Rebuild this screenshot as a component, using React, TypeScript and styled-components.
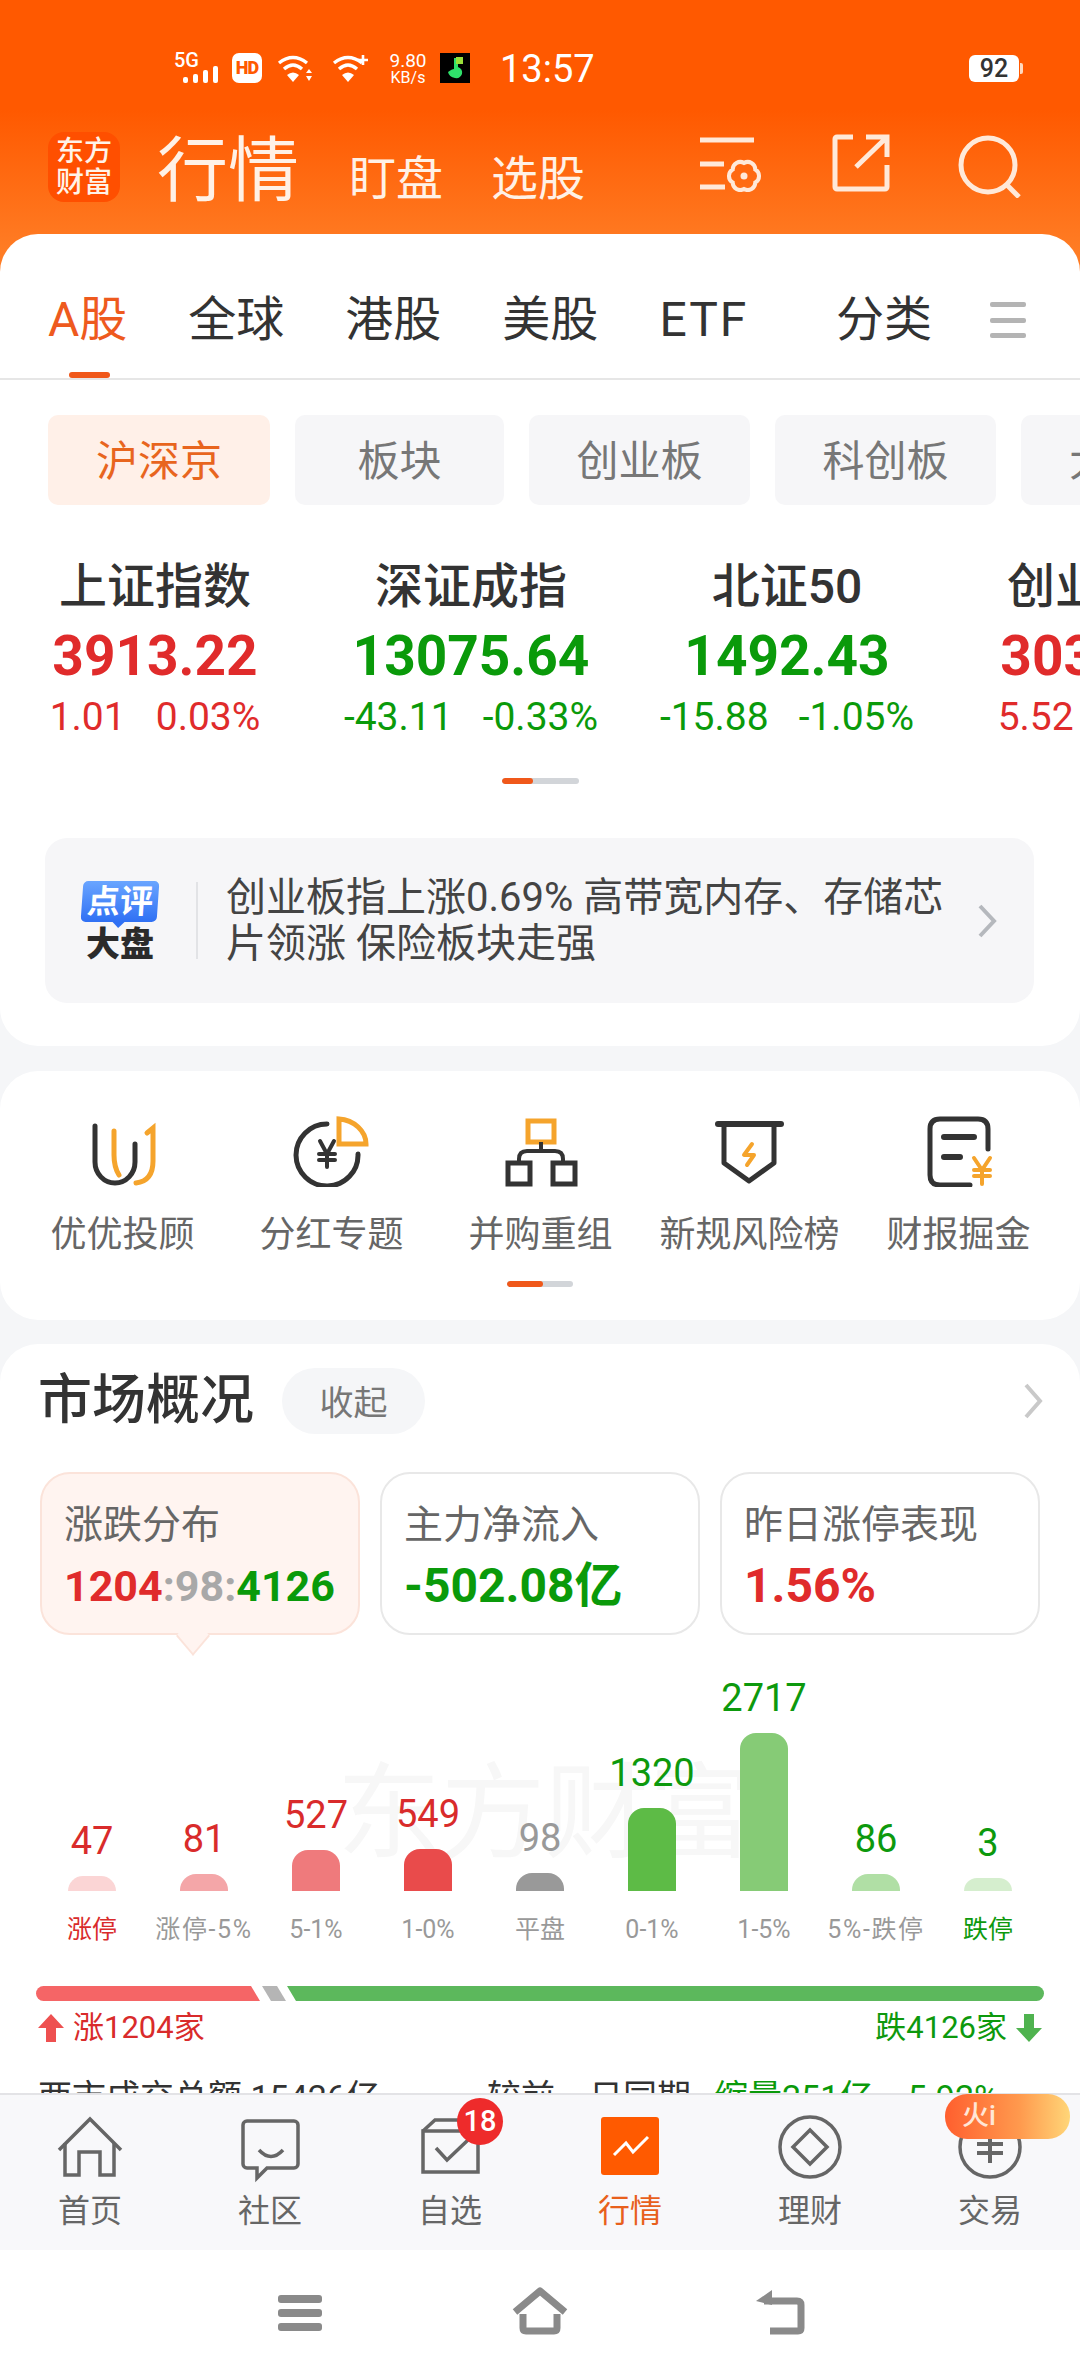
import React from 'react'
import styled, { createGlobalStyle } from 'styled-components'

const RED = '#e02b2b'
const GREEN = '#0a9a0a'
const GOLD = '#f5a42c'
const INK = '#333'
const FONT = 'Roboto, "Noto Sans CJK SC", "Noto Sans", sans-serif'

const GlobalStyle = createGlobalStyle`
  html, body { margin: 0; padding: 0; background: #fff; }
  * { box-sizing: border-box; }
  body { font-family: ${FONT}; }
`

const Screen = styled.div`
  width: 1080px;
  height: 2376px;
  display: flex;
  flex-direction: column;
  overflow: hidden;
  position: relative;
  background: linear-gradient(#ff5900 0, #ff5900 110px, #ff7c24 250px, #ff7c24 290px, #f5f6f8 290px);
`

const Scroll = styled.div`
  height: 2093px;
  flex: none;
  overflow: hidden;
`

/* status bar */
const StatusBar = styled.div`
  height: 120px;
  padding: 53px 61px 0 174px;
  display: flex;
  align-items: flex-start;
  color: #fff;
`
const FiveG = styled.div`
  width: 45px;
  height: 30px;
  position: relative;
  margin-right: 13px;
  font-size: 20px;
  font-weight: 500;
  line-height: 15px;
  svg { position: absolute; right: 0; bottom: 0; }
`
const HdBadge = styled.div`
  width: 30px;
  height: 30px;
  border-radius: 7px;
  background: #fff;
  color: #ff5900;
  font-size: 18px;
  font-weight: 900;
  line-height: 30px;
  text-align: center;
  letter-spacing: -1px;
  margin-right: 15px;
`
const Speed = styled.div`
  width: 40px;
  margin: 0 12px 0 20px;
  text-align: center;
  font-size: 19px;
  line-height: 15px;
  white-space: nowrap;
  small { display: block; font-size: 16px; margin-top: 2px; }
`
const AppThumb = styled.div`
  width: 30px;
  height: 30px;
  background: #000;
  margin-right: 30px;
`
const Clock = styled.div`
  font-size: 38px;
  line-height: 32px;
  margin-top: 0;
`
const Battery = styled.div`
  margin-left: auto;
  width: 50px;
  height: 27px;
  margin-top: 2px;
  border-radius: 6px;
  background: #fff;
  color: #333;
  font-size: 25px;
  font-weight: 500;
  line-height: 27px;
  text-align: center;
  position: relative;
  &::after {
    content: '';
    position: absolute;
    right: -4px;
    top: 8px;
    width: 3px;
    height: 11px;
    border-radius: 0 2px 2px 0;
    background: #ffd9bf;
  }
`

/* title row */
const Header = styled.div`
  height: 114px;
  padding: 12px 58px 0 48px;
  display: flex;
  align-items: flex-start;
  color: #fff1e6;
`
const Logo = styled.div`
  width: 72px;
  height: 70px;
  border-radius: 16px;
  background: #ff4f00;
  color: #fff3e8;
  font-size: 28px;
  line-height: 31px;
  font-weight: 500;
  text-align: center;
  padding-top: 4px;
  margin-right: 37px;
`
const BigTitle = styled.div`
  font-size: 71px;
  line-height: 71px;
  margin: 3px 50px 0 0;
`
const SubTitle = styled.div`
  font-size: 47px;
  line-height: 54px;
  margin: 20px 48px 0 0;
`
const HeaderIcons = styled.div`
  margin-left: auto;
  display: flex;
  align-items: flex-start;
  gap: 68px;
  margin-top: 2px;
`

/* cards */
const Card = styled.div`
  background: #fff;
  border-radius: 38px;
`
const QuoteCard = styled(Card)`
  height: 812px;
  margin-bottom: 25px;
  overflow: hidden;
`
const TabRow = styled.div`
  height: 146px;
  padding: 60px 54px 0 48px;
  display: flex;
  border-bottom: 2px solid #e6e6e6;
`
const TabScroll = styled.div`
  width: 782px;
  display: flex;
  gap: 61px;
  overflow: hidden;
  position: relative;
  &::after {
    content: '';
    position: absolute;
    top: 0;
    right: 0;
    bottom: 0;
    width: 50px;
    background: linear-gradient(90deg, rgba(255, 255, 255, 0.85), #fff 60%);
  }
`
const Tab = styled.div<{ $active?: boolean; $spaced?: boolean }>`
  flex: none;
  height: 84px;
  font-size: 48px;
  line-height: 52px;
  letter-spacing: ${(p) => (p.$spaced ? '2px' : '0')};
  color: ${(p) => (p.$active ? '#ee5a1e' : INK)};
  position: relative;
  &::after {
    content: '';
    display: ${(p) => (p.$active ? 'block' : 'none')};
    position: absolute;
    left: 21px;
    bottom: 0;
    width: 41px;
    height: 6px;
    border-radius: 3px;
    background: #f0581a;
  }
`
const TabMenu = styled.div`
  margin: 8px 0 0 auto;
  width: 36px;
  height: 36px;
  display: flex;
  flex-direction: column;
  justify-content: space-between;
  i { display: block; height: 5px; border-radius: 2px; background: #b4b4b4; }
`
const ChipRow = styled.div`
  margin-top: 35px;
  padding-left: 48px;
  display: flex;
  gap: 25px;
  overflow: hidden;
`
const Chip = styled.div<{ $active?: boolean; $width: number }>`
  flex: none;
  width: ${(p) => p.$width}px;
  height: 90px;
  border-radius: 10px;
  background: ${(p) => (p.$active ? '#fff0e8' : '#f6f6f8')};
  color: ${(p) => (p.$active ? '#e8651e' : '#777')};
  font-size: 42px;
  line-height: 94px;
  text-align: center;
`
const IndexRow = styled.div`
  margin: 52px 0 0 -3px;
  display: flex;
`
const IndexCol = styled.div`
  flex: none;
  width: 316px;
  display: flex;
  flex-direction: column;
  align-items: center;
  white-space: nowrap;
`
const IndexName = styled.div`
  font-size: 48px;
  font-weight: 500;
  line-height: 60px;
  color: ${INK};
`
const IndexValue = styled.div<{ $up: boolean }>`
  margin-top: 7px;
  font-size: 55px;
  font-weight: 700;
  line-height: 64px;
  color: ${(p) => (p.$up ? RED : GREEN)};
`
const IndexChange = styled.div<{ $up: boolean }>`
  margin-top: 7px;
  display: flex;
  gap: 30px;
  font-size: 39px;
  line-height: 44px;
  color: ${(p) => (p.$up ? RED : GREEN)};
`
const Pager = styled.div<{ $width: number; $fill: number; $top: number }>`
  width: ${(p) => p.$width}px;
  height: 6px;
  margin: ${(p) => p.$top}px auto 0;
  border-radius: 3px;
  background: #d2d5d9;
  overflow: hidden;
  &::before {
    content: '';
    display: block;
    width: ${(p) => p.$fill}px;
    height: 6px;
    border-radius: 3px;
    background: #f0581a;
  }
`
const Banner = styled.div`
  margin: 54px 46px 0 45px;
  height: 165px;
  border-radius: 22px;
  background: #f6f6f8;
  display: flex;
  align-items: center;
  padding-left: 37px;
`
const BannerMark = styled.div`
  width: 76px;
  flex: none;
  display: flex;
  flex-direction: column;
  align-items: center;
`
const Bubble = styled.div`
  width: 76px;
  height: 41px;
  border-radius: 5px;
  background: linear-gradient(#6aa5ff, #2f70f4);
  color: #fff;
  font-size: 33px;
  font-weight: 700;
  line-height: 41px;
  text-align: center;
  white-space: nowrap;
  position: relative;
  transform: skewX(-4deg);
  &::after {
    content: '';
    position: absolute;
    left: 32px;
    bottom: -6px;
    border: 6px solid transparent;
    border-bottom: 0;
    border-top-color: #2f70f4;
  }
`
const BubbleFoot = styled.div`
  font-size: 34px;
  font-weight: 900;
  line-height: 34px;
  margin-top: 5px;
  color: #2b2b2b;
  white-space: nowrap;
`
const BannerRule = styled.div`
  width: 2px;
  height: 77px;
  background: #e2e3e6;
  margin: 0 28px 0 38px;
  flex: none;
`
const BannerText = styled.div`
  font-size: 40px;
  line-height: 46px;
  color: #444;
  white-space: nowrap;
`
const ChevronSlot = styled.div`
  margin: 0 37px 0 auto;
  display: flex;
`

const ShortcutCard = styled(Card)`
  height: 249px;
  margin-bottom: 24px;
  padding-top: 44px;
`
const ShortcutRow = styled.div`
  padding-left: 18px;
  display: grid;
  grid-template-columns: repeat(5, 209px);
`
const Shortcut = styled.div`
  display: flex;
  flex-direction: column;
  align-items: center;
  white-space: nowrap;
  svg { display: block; }
`
const ShortcutLabel = styled.div`
  margin-top: 27px;
  font-size: 36px;
  line-height: 43px;
  color: #666;
`

const MarketCard = styled(Card)`
  padding-top: 24px;
  border-radius: 38px 38px 0 0;
`
const MarketHead = styled.div`
  padding: 0 37px 0 38px;
  display: flex;
  align-items: center;
  height: 66px;
`
const MarketTitle = styled.div`
  font-size: 54px;
  font-weight: 500;
  color: ${INK};
  line-height: 72px;
  margin-right: 28px;
`
const FoldPill = styled.div`
  width: 143px;
  height: 66px;
  border-radius: 33px;
  background: #f5f6f8;
  color: #777;
  font-size: 34px;
  line-height: 70px;
  text-align: center;
`
const StatRow = styled.div`
  margin-top: 38px;
  padding: 0 40px;
  display: grid;
  grid-template-columns: repeat(3, 320px);
  gap: 20px;
`
const Stat = styled.div<{ $active?: boolean }>`
  height: 163px;
  border-radius: 30px;
  border: 2px solid ${(p) => (p.$active ? '#fbe3da' : '#e8e8e8')};
  background: ${(p) => (p.$active ? '#fff4f0' : '#fff')};
  padding: 29px 0 0 22px;
  position: relative;
  ${(p) =>
    p.$active &&
    `&::after {
      content: '';
      position: absolute;
      left: 137px;
      bottom: -17px;
      width: 26px;
      height: 26px;
      background: #fff4f0;
      border-right: 2px solid #fbe3da;
      border-bottom: 2px solid #fbe3da;
      transform: scaleX(0.85) rotate(45deg);
    }`}
`
const StatLabel = styled.div`
  font-size: 39px;
  line-height: 44px;
  color: #666;
  white-space: nowrap;
`
const StatValue = styled.div<{ $color: string; $size: number }>`
  margin-top: 11px;
  font-size: ${(p) => p.$size}px;
  font-weight: 700;
  line-height: 56px;
  color: ${(p) => p.$color};
  white-space: nowrap;
`
const Tone = styled.span<{ $color: string }>`
  color: ${(p) => p.$color};
`

const Chart = styled.div`
  height: 287px;
  margin-top: 25px;
  padding-left: 36px;
  display: grid;
  grid-template-columns: repeat(9, 112px);
  position: relative;
`
const Watermark = styled.div`
  position: absolute;
  left: 337px;
  top: 100px;
  font-size: 104px;
  line-height: 110px;
  color: #f7f7f7;
  white-space: nowrap;
`
const ChartCol = styled.div`
  display: flex;
  flex-direction: column;
  justify-content: flex-end;
  align-items: center;
  position: relative;
`
const ChartValue = styled.div<{ $color: string }>`
  font-size: 38px;
  line-height: 38px;
  margin-bottom: 16px;
  color: ${(p) => p.$color};
`
const ChartBar = styled.div<{ $color: string }>`
  width: 48px;
  border-radius: 16px 16px 0 0;
  background: ${(p) => p.$color};
`
const ChartLabel = styled.div<{ $color: string; $wide?: boolean }>`
  margin-top: 22px;
  font-size: 25px;
  line-height: 34px;
  letter-spacing: ${(p) => (p.$wide ? '1.6px' : '0')};
  color: ${(p) => p.$color};
  white-space: nowrap;
`
const RatioBar = styled.div`
  margin: 39px 36px 0;
  height: 15px;
  display: flex;
`
const RatioUp = styled.div`
  width: 224px;
  background: #f56566;
  border-radius: 8px 0 0 8px;
  clip-path: polygon(0 0, 215px 0, 100% 100%, 0 100%);
`
const RatioFlat = styled.div`
  width: 24px;
  margin-left: 2px;
  background: #b5b5b5;
  clip-path: polygon(0 0, 15px 0, 100% 100%, 9px 100%);
`
const RatioDown = styled.div`
  flex: 1;
  margin-left: 1px;
  background: #5cb85c;
  border-radius: 0 8px 8px 0;
  clip-path: polygon(0 0, 100% 0, 100% 100%, 9px 100%);
`
const Legend = styled.div`
  margin-top: 9px;
  padding: 0 38px 0 38px;
  display: flex;
  justify-content: space-between;
  font-size: 31px;
  line-height: 36px;
`
const LegendSide = styled.div<{ $color: string }>`
  display: flex;
  align-items: center;
  gap: 9px;
  color: ${(p) => p.$color};
`
const Summary = styled.div`
  margin-top: 28px;
  padding-left: 38px;
  display: flex;
  font-size: 34px;
  line-height: 46px;
  color: ${INK};
  white-space: nowrap;
`
const SummaryPart = styled.span<{ $left: number; $color?: string }>`
  margin-left: ${(p) => p.$left}px;
  color: ${(p) => p.$color || 'inherit'};
`

/* bottom nav */
const Nav = styled.div`
  height: 157px;
  flex: none;
  background: #f8f8fa;
  border-top: 2px solid #e3e3e6;
  padding-top: 18px;
  display: grid;
  grid-template-columns: repeat(6, 180px);
  position: relative;
`
const NavItem = styled.div<{ $active?: boolean }>`
  display: flex;
  flex-direction: column;
  align-items: center;
  color: ${(p) => (p.$active ? '#e8601c' : '#666')};
  position: relative;
  svg { display: block; }
`
const NavLabel = styled.div`
  margin-top: 8px;
  font-size: 32px;
  line-height: 40px;
`
const CountBadge = styled.div`
  position: absolute;
  left: 97px;
  top: -15px;
  width: 46px;
  height: 47px;
  border-radius: 50%;
  background: #ee2b2b;
  color: #fff;
  font-size: 29px;
  font-weight: 500;
  line-height: 47px;
  text-align: center;
`
const FirePill = styled.div`
  position: absolute;
  left: 945px;
  top: -1px;
  width: 125px;
  height: 45px;
  border-radius: 22px;
  background: linear-gradient(90deg, #ff5f2e, #ff9a4e 60%, #ffd678);
  color: #ffe6d6;
  font-size: 27px;
  font-weight: 500;
  line-height: 44px;
  padding-left: 17px;
`
const SystemBar = styled.div`
  flex: 1;
  background: #fff;
  padding: 36px 0 0 180px;
  display: grid;
  grid-template-columns: repeat(3, 240px);
  justify-items: center;
  align-items: start;
`

const WifiIcon = ({ plus }: { plus?: boolean }) => (
  <svg width="36" height="30" viewBox="0 0 36 30" style={{ marginRight: 19 }} fill="none" stroke="#fff" strokeWidth="3.4">
    <path d="M2 10 Q16 -1 30 10" />
    <path d="M7 16 Q16 8 25 16" />
    <path d="M16 29 L10 22 Q16 17 22 22Z" fill="#fff" stroke="none" />
    {plus ? (
      <path d="M31 2 V12 M26 7 H36" strokeWidth="2.6" />
    ) : (
      <path d="M32 16 L35 20 H29Z M32 28 L35 23 H29Z" fill="#fff" stroke="none" />
    )}
  </svg>
)

const gearPath = (() => {
  const cx = 22
  const cy = 20
  const pts = Array.from({ length: 6 }, (_, i) => {
    const a = (Math.PI / 3) * i + Math.PI / 6
    return [cx + 13 * Math.cos(a), cy + 13 * Math.sin(a)]
  })
  return (
    `M${pts[0][0].toFixed(1)} ${pts[0][1].toFixed(1)} ` +
    pts
      .slice(1)
      .concat([pts[0]])
      .map((p) => `A7.5 7.5 0 0 1 ${p[0].toFixed(1)} ${p[1].toFixed(1)}`)
      .join(' ') +
    'Z'
  )
})()

const SettingsIcon = () => (
  <svg width="64" height="58" viewBox="0 0 64 58" fill="none" stroke="#ffe9d9" strokeWidth="5">
    <path d="M0 6 H54 M0 30 H24 M0 53 H25" />
    <g transform="translate(22 22)">
      <path d={gearPath} strokeWidth="4" />
      <circle cx="22" cy="20" r="3.5" fill="#ffe9d9" stroke="none" />
    </g>
  </svg>
)
const ExportIcon = () => (
  <svg width="58" height="58" viewBox="0 0 58 58" fill="none" stroke="#ffe9d9" strokeWidth="5">
    <path d="M21 3 H5 a2 2 0 0 0 -2 2 V53 a2 2 0 0 0 2 2 H53 a2 2 0 0 0 2 -2 V31" />
    <path d="M34 3 H55 V23 M55 3 L24 33" />
  </svg>
)
const SearchIcon = () => (
  <svg width="64" height="64" viewBox="0 0 64 64" fill="none" stroke="#ffe9d9" strokeWidth="5">
    <circle cx="30" cy="31" r="27" />
    <path d="M48 50 L61 63" />
  </svg>
)

const ChevronIcon = ({ color, h }: { color: string; h: number }) => (
  <svg width="20" height={h} viewBox={`0 0 20 ${h}`} fill="none" stroke={color} strokeWidth="4">
    <path d={`M3 2 L17 ${h / 2} L3 ${h - 2}`} />
  </svg>
)

const ShortcutIcons = [
  <svg key="u" width="80" height="72" viewBox="0 0 80 72" fill="none" strokeWidth="5" strokeLinecap="round">
    <path d="M12 11 V47 A20 21 0 0 0 52 47 V29" stroke={INK} />
    <path d="M31 16 V40 Q31 52 36 60" stroke={GOLD} />
    <path d="M64 18 L70 13 V46 Q70 66 53 68" stroke={GOLD} />
  </svg>,
  <svg key="y" width="80" height="72" viewBox="0 0 80 72" fill="none" strokeWidth="5" strokeLinecap="round">
    <path d="M35 9 A31 31 0 1 0 66 39" stroke={INK} />
    <path d="M28 26 L35 39 L42 26 M35 39 V52 M27 39 H43 M27 45 H43" stroke={INK} strokeWidth="4" />
    <path d="M47 4 V29 H74 C74 16 62 5 47 4Z" stroke={GOLD} />
  </svg>,
  <svg key="org" width="80" height="72" viewBox="0 0 80 72" fill="none" strokeWidth="5">
    <rect x="27" y="6" width="26" height="21" stroke={GOLD} />
    <path d="M40 27 V36 M18 46 V44 Q18 36 26 36 H54 Q62 36 62 44 V46" stroke={INK} strokeWidth="4" />
    <rect x="7" y="48" width="22" height="21" stroke={INK} />
    <rect x="52" y="48" width="22" height="21" stroke={INK} />
  </svg>,
  <svg key="shield" width="80" height="72" viewBox="0 0 80 72" fill="none" strokeWidth="5" strokeLinecap="round" strokeLinejoin="round">
    <path d="M8 9 H71" stroke={INK} strokeWidth="6" />
    <path d="M14 10 V48 L39 66 L64 48 V10" stroke={INK} />
    <path d="M42 29 L34 40 H44 L37 50" stroke={GOLD} strokeWidth="4" />
  </svg>,
  <svg key="doc" width="80" height="72" viewBox="0 0 80 72" fill="none" strokeWidth="5" strokeLinecap="round">
    <path d="M69 34 V14 Q69 4 59 4 H21 Q11 4 11 14 V60 Q11 70 21 70 H51" stroke={INK} />
    <path d="M25 22 H55 M25 42 H41" stroke={INK} strokeWidth="6" />
    <path d="M55 43 L63 55 L71 43 M63 55 V69 M55 55 H71 M55 61 H71" stroke={GOLD} strokeWidth="4" />
  </svg>,
]

const shortcuts = ['优优投顾', '分红专题', '并购重组', '新规风险榜', '财报掘金']

const indices = [
  { name: '上证指数', value: '3913.22', diff: '1.01', pct: '0.03%', up: true },
  { name: '深证成指', value: '13075.64', diff: '-43.11', pct: '-0.33%', up: false },
  { name: '北证50', value: '1492.43', diff: '-15.88', pct: '-1.05%', up: false },
  { name: '创业板指', value: '3034.26', diff: '5.52', pct: '0.18%', up: true },
]

const chartRows = [
  { value: '47', bar: 15, barColor: '#fbd5d5', tone: '#d92b2b', label: '涨停', labelTone: '#d92b2b' },
  { value: '81', bar: 17, barColor: '#f4a6a8', tone: '#d92b2b', label: '涨停-5%', labelTone: '#999', wide: true },
  { value: '527', bar: 41, barColor: '#ef7a7c', tone: '#d92b2b', label: '5-1%', labelTone: '#999' },
  { value: '549', bar: 42, barColor: '#e94b4b', tone: '#d92b2b', label: '1-0%', labelTone: '#999' },
  { value: '98', bar: 18, barColor: '#999', tone: '#999', label: '平盘', labelTone: '#999' },
  { value: '1320', bar: 83, barColor: '#5dbb46', tone: '#0d990d', label: '0-1%', labelTone: '#999' },
  { value: '2717', bar: 158, barColor: '#86cb76', tone: '#0d990d', label: '1-5%', labelTone: '#999' },
  { value: '86', bar: 17, barColor: '#b0dfa5', tone: '#0d990d', label: '5%-跌停', labelTone: '#999', wide: true },
  { value: '3', bar: 13, barColor: '#d5eece', tone: '#0d990d', label: '跌停', labelTone: '#0d990d' },
]

const navIcons = [
  <svg key="home" width="80" height="70" viewBox="0 0 80 70" fill="none" stroke="#666" strokeWidth="3.5">
    <path d="M9 37 L40 6 L71 37" />
    <path d="M15 30 V62 H29 V39 H50 V62 H64 V30" />
  </svg>,
  <svg key="chat" width="80" height="70" viewBox="0 0 80 70" fill="none" stroke="#666" strokeWidth="3.5">
    <path d="M17 8 H64 a4 4 0 0 1 4 4 V51 a4 4 0 0 1 -4 4 H37 L27 65 V55 H17 a4 4 0 0 1 -4 -4 V12 a4 4 0 0 1 4 -4Z" />
    <path d="M29 37 Q41 50 53 37" />
  </svg>,
  <svg key="watch" width="80" height="70" viewBox="0 0 80 70" fill="none" stroke="#666" strokeWidth="3.5">
    <path d="M13 18 H68 V59 H13Z" />
    <path d="M13 18 L25 7 H50" />
    <path d="M26 35 L37 47 L58 27" />
  </svg>,
  <svg key="market" width="80" height="70" viewBox="0 0 80 70" fill="none">
    <rect x="11" y="4" width="58" height="58" rx="3" fill="#ff5a00" />
    <path d="M24 42 L36 30 L43 39 L58 24" stroke="#fff" strokeWidth="3" />
  </svg>,
  <svg key="finance" width="80" height="70" viewBox="0 0 80 70" fill="none" stroke="#666" strokeWidth="3.5">
    <circle cx="40" cy="34" r="30" />
    <path d="M40 17 L57 34 L40 51 L23 34Z" />
  </svg>,
  <svg key="trade" width="80" height="70" viewBox="0 0 80 70" fill="none" stroke="#666" strokeWidth="3.5">
    <circle cx="40" cy="34" r="30" />
    <path d="M27 31 H53 M27 40 H53 M40 18 V50" strokeWidth="4" />
  </svg>,
]
const navLabels = ['首页', '社区', '自选', '行情', '理财', '交易']

const App = () => (
  <Screen>
    <GlobalStyle />
    <Scroll>
      <StatusBar>
        <FiveG>
          5G
          <svg width="36" height="17" viewBox="0 0 36 17" fill="#fff">
            <rect x="0" y="11" width="5" height="6" rx="2" />
            <rect x="10" y="8" width="5" height="9" rx="2" />
            <rect x="20" y="4" width="5" height="13" rx="2" />
            <rect x="30" y="0" width="5" height="17" rx="2" />
          </svg>
        </FiveG>
        <HdBadge>HD</HdBadge>
        <WifiIcon />
        <WifiIcon plus />
        <Speed style={{ marginLeft: 1 }}>
          9.80
          <small>KB/s</small>
        </Speed>
        <AppThumb>
          <svg width="30" height="30" viewBox="0 0 30 30">
            <path d="M14 5 H23 V11 H18 V14 Q23 16 22 21 Q20 26 15 25 Q9 24 8 19 Q12 16 14 16Z" fill="#2fe06a" />
            <rect x="16" y="4" width="7" height="7" fill="#9be03a" />
          </svg>
        </AppThumb>
        <Clock>13:57</Clock>
        <Battery>92</Battery>
      </StatusBar>
      <Header>
        <Logo>
          东方
          <br />
          财富
        </Logo>
        <BigTitle>行情</BigTitle>
        <SubTitle>盯盘</SubTitle>
        <SubTitle>选股</SubTitle>
        <HeaderIcons>
          <SettingsIcon />
          <ExportIcon />
          <SearchIcon />
        </HeaderIcons>
      </Header>

      <QuoteCard>
        <TabRow>
          <TabScroll>
            <Tab $active>A股</Tab>
            <Tab>全球</Tab>
            <Tab>港股</Tab>
            <Tab>美股</Tab>
            <Tab $spaced>ETF</Tab>
            <Tab>基金</Tab>
          </TabScroll>
          <Tab style={{ marginLeft: 6 }}>分类</Tab>
          <TabMenu>
            <i />
            <i />
            <i />
          </TabMenu>
        </TabRow>
        <ChipRow>
          <Chip $active $width={222}>沪深京</Chip>
          <Chip $width={209}>板块</Chip>
          <Chip $width={221}>创业板</Chip>
          <Chip $width={221}>科创板</Chip>
          <Chip $width={222}>大盘股</Chip>
        </ChipRow>
        <IndexRow>
          {indices.map((item) => (
            <IndexCol key={item.name}>
              <IndexName>{item.name}</IndexName>
              <IndexValue $up={item.up}>{item.value}</IndexValue>
              <IndexChange $up={item.up}>
                <span>{item.diff}</span>
                <span>{item.pct}</span>
              </IndexChange>
            </IndexCol>
          ))}
        </IndexRow>
        <Pager $width={77} $fill={31} $top={39} />
        <Banner>
          <BannerMark>
            <Bubble>点评</Bubble>
            <BubbleFoot>大盘</BubbleFoot>
          </BannerMark>
          <BannerRule />
          <BannerText>
            创业板指上涨0.69% 高带宽内存、存储芯
            <br />
            片领涨 保险板块走强
          </BannerText>
          <ChevronSlot>
            <ChevronIcon color="#b5b8bd" h={34} />
          </ChevronSlot>
        </Banner>
      </QuoteCard>

      <ShortcutCard>
        <ShortcutRow>
          {shortcuts.map((label, i) => (
            <Shortcut key={label}>
              {ShortcutIcons[i]}
              <ShortcutLabel>{label}</ShortcutLabel>
            </Shortcut>
          ))}
        </ShortcutRow>
        <Pager $width={66} $fill={36} $top={24} />
      </ShortcutCard>

      <MarketCard>
        <MarketHead>
          <MarketTitle>市场概况</MarketTitle>
          <FoldPill>收起</FoldPill>
          <ChevronSlot style={{ marginRight: 0 }}>
            <ChevronIcon color="#c9c9c9" h={36} />
          </ChevronSlot>
        </MarketHead>
        <StatRow>
          <Stat $active>
            <StatLabel>涨跌分布</StatLabel>
            <StatValue $color={RED} $size={43}>
              1204<Tone $color="#a8a8a8">:98:</Tone>
              <Tone $color={GREEN}>4126</Tone>
            </StatValue>
          </Stat>
          <Stat>
            <StatLabel>主力净流入</StatLabel>
            <StatValue $color={GREEN} $size={48}>-502.08亿</StatValue>
          </Stat>
          <Stat>
            <StatLabel>昨日涨停表现</StatLabel>
            <StatValue $color={RED} $size={48}>1.56%</StatValue>
          </Stat>
        </StatRow>
        <Chart>
          <Watermark>东方财富</Watermark>
          {chartRows.map((row) => (
            <ChartCol key={row.label}>
              <ChartValue $color={row.tone}>{row.value}</ChartValue>
              <ChartBar $color={row.barColor} style={{ height: row.bar }} />
              <ChartLabel $color={row.labelTone} $wide={row.wide}>{row.label}</ChartLabel>
            </ChartCol>
          ))}
        </Chart>
        <RatioBar>
          <RatioUp />
          <RatioFlat />
          <RatioDown />
        </RatioBar>
        <Legend>
          <LegendSide $color="#d92b2b">
            <svg width="26" height="28" viewBox="0 0 26 28" fill="#ee5050">
              <path d="M13 0 L26 14 H18 V28 H8 V14 H0Z" />
            </svg>
            涨1204家
          </LegendSide>
          <LegendSide $color="#0d990d">
            跌4126家
            <svg width="26" height="28" viewBox="0 0 26 28" fill="#4fb34f">
              <path d="M13 28 L26 14 H18 V0 H8 V14 H0Z" />
            </svg>
          </LegendSide>
        </Legend>
        <Summary>
          <span>两市成交总额&nbsp;15426亿</span>
          <SummaryPart $left={107}>较前一日同期</SummaryPart>
          <SummaryPart $left={23} $color={GREEN}>缩量251亿</SummaryPart>
          <SummaryPart $left={25} $color={GREEN}>-5.92%</SummaryPart>
        </Summary>
      </MarketCard>
    </Scroll>

    <Nav>
      {navLabels.map((label, i) => (
        <NavItem key={label} $active={label === '行情'}>
          {navIcons[i]}
          <NavLabel>{label}</NavLabel>
          {label === '自选' && <CountBadge>18</CountBadge>}
        </NavItem>
      ))}
      <FirePill>火i</FirePill>
    </Nav>

    <SystemBar>
      <svg width="60" height="50" viewBox="0 0 60 50" fill="#8a8a8a">
        <rect x="8" y="9" width="44" height="8" rx="3" />
        <rect x="8" y="23" width="44" height="8" rx="3" />
        <rect x="8" y="37" width="44" height="8" rx="3" />
      </svg>
      <svg width="60" height="50" viewBox="0 0 60 50" fill="none" stroke="#8a8a8a" strokeWidth="7" strokeLinejoin="round">
        <path d="M5 26 L30 5 L55 26" />
        <path d="M13 28 V42 Q13 45 16 45 H44 Q47 45 47 42 V28" />
      </svg>
      <svg width="60" height="50" viewBox="0 0 60 50" fill="none" stroke="#8a8a8a" strokeWidth="7">
        <path d="M14 15 H47 Q51 15 51 19 V42 Q51 45 48 45 H20" />
        <path d="M6 15 L22 4 V19 Z" fill="#8a8a8a" stroke="none" />
      </svg>
    </SystemBar>
  </Screen>
)

export default App
